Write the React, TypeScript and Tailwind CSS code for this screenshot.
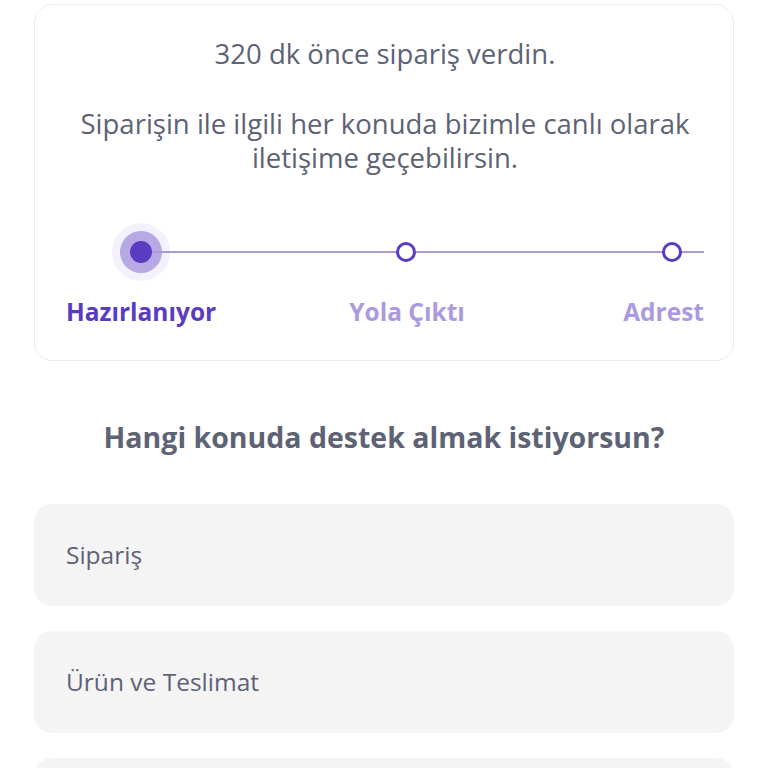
const font = { fontFamily: '"Open Sans", "Noto Sans", sans-serif' };

const topics = ['Sipariş', 'Ürün ve Teslimat', 'Ödeme'];

export default function App() {
  return (
    <div className="min-h-screen bg-white px-[34px] pt-[4px]" style={font}>
      <section className="rounded-[18px] border border-[#ececf0] pb-[31px] pl-[31px] pr-[29px] pt-[32px]">
        <p className="text-center text-[27.5px] leading-[34px] text-[#5d6275]">320 dk önce sipariş verdin.</p>
        <p className="mt-[36px] text-center text-[27.5px] leading-[34px] text-[#5d6275]">
          Siparişin ile ilgili her konuda bizimle canlı olarak iletişime geçebilirsin.
        </p>

        <div className="mt-[47px] flex items-center pl-[45px]">
          <svg width="60" height="60" viewBox="0 0 60 60" className="shrink-0">
            <circle cx="30" cy="30" r="29" fill="#f3f1fb" />
            <circle cx="30" cy="30" r="21" fill="#b6a9e4" />
            <line x1="40" y1="30" x2="60" y2="30" stroke="#a99bd8" strokeWidth="2" />
            <circle cx="30" cy="30" r="11" fill="#5a3cc2" />
          </svg>
          <div className="h-[2px] w-[226px] bg-[#a99bd8]" />
          <div className="h-[20px] w-[20px] shrink-0 rounded-full border-[3px] border-[#5a3cc2] bg-white" />
          <div className="h-[2px] w-[247px] bg-[#a99bd8]" />
          <div className="h-[20px] w-[20px] shrink-0 rounded-full border-[3px] border-[#5a3cc2] bg-white" />
          <div className="h-[2px] w-[22px] bg-[#a99bd8]" />
        </div>

        <div className="mt-[13px] grid grid-cols-[201px_280px_1fr] text-[24.5px] font-bold leading-[34px]">
          <span className="text-[#5a3cc2]">Hazırlanıyor</span>
          <span className="text-center text-[#ab9ae0]">Yola Çıktı</span>
          <span className="text-right text-[#ab9ae0]">Adrest</span>
        </div>
      </section>

      <h2 className="mt-[58px] text-center text-[28.5px] font-bold leading-[36px] text-[#5d6275]">
        Hangi konuda destek almak istiyorsun?
      </h2>

      <div className="mt-[49px] flex flex-col gap-[25px]">
        {topics.map((t) => (
          <div key={t} className="flex h-[102px] items-center rounded-[18px] bg-[#f4f4f5] pl-[32px] text-[24.5px] text-[#5d6275]">
            {t}
          </div>
        ))}
      </div>
    </div>
  );
}
